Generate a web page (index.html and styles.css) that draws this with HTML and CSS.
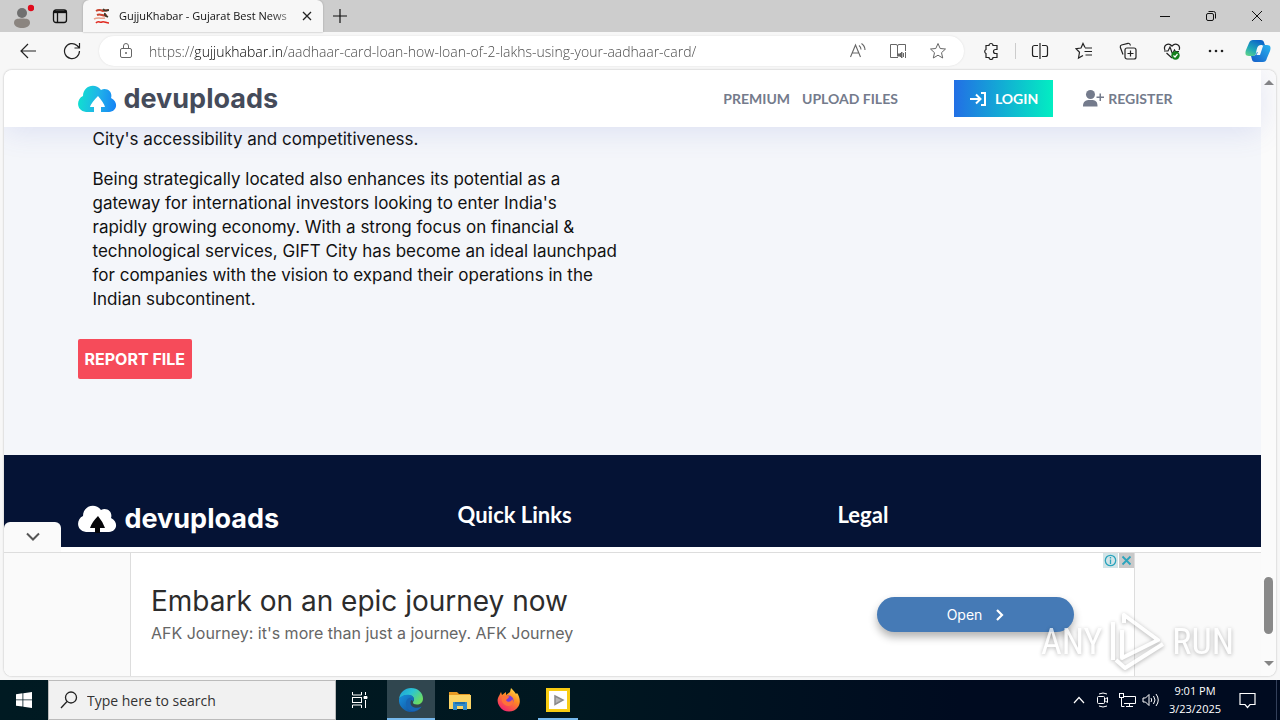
FILE: index.html
```html
<!DOCTYPE html>
<html lang="en">
<head>
    <meta charset="UTF-8">
    <title>GujjuKhabar - Gujarat Best News</title>
    <link rel="stylesheet" href="styles.css">
</head>
<body>
    <div class="browser">
        <div class="tab-strip">
            <button class="strip-btn profile" aria-label="Profile">
                <svg width="24" height="28" viewBox="0 0 24 28"><circle cx="12" cy="11" r="5" fill="#707070"/><path d="M4 21c0-4 3-4.500 8-4.500s8 .5 8 4.500c0 3-4 5-8 5s-8-2-8-5z" fill="#8b8580"/><circle cx="21" cy="6" r="3.200" fill="#e00b1c"/></svg>
            </button>
            <button class="strip-btn" aria-label="Tab actions">
                <svg width="16" height="16" viewBox="0 0 16 16" fill="none" stroke="#111" stroke-width="1.300"><rect x="1.500" y="2" width="13" height="12.500" rx="2.500"/><path d="M2 3.500h12v1H2z" fill="#111"/><path d="M5.500 5v9"/></svg>
            </button>
            <div class="tab">
                <svg width="18" height="18" viewBox="0 0 18 18" fill="none"><path d="M3 4c3-2 5-1 7 0l5-1M4 8c4-2 6 2 10 0" stroke="#c9442f" stroke-width="2"/><path d="M10 2c2 3 4 1 6 1M12 6c-1 3 1 3 3 4" stroke="#3d3a2c" stroke-width="1.800"/><path d="M1 12c4-2 8 0 11-1" stroke="#e8a18c" stroke-width="1.500"/><path d="M3 16c2-3 4 0 6-1s4 1 7 1" stroke="#e02b22" stroke-width="1.600"/></svg>
                <span class="tab-title">GujjuKhabar - Gujarat Best News</span>
                <button class="tab-close" aria-label="Close tab">
                    <svg width="10" height="10" viewBox="0 0 10 10" stroke="#222" stroke-width="1.300"><path d="M1 1l8 8M9 1L1 9"/></svg>
                </button>
            </div>
            <button class="new-tab" aria-label="New tab">
                <svg width="14" height="14" viewBox="0 0 14 14" stroke="#111" stroke-width="1.200"><path d="M7 0v14M0 7h14"/></svg>
            </button>
            <div class="window-controls">
                <button aria-label="Minimize"><svg width="12" height="12" viewBox="0 0 12 12" stroke="#111"><path d="M1 6.500h10"/></svg></button>
                <button aria-label="Restore"><svg width="12" height="12" viewBox="0 0 12 12" fill="none" stroke="#111"><rect x="1.500" y="3.500" width="7" height="7" rx="1.500"/><path d="M3.500 1.500h5a2 2 0 0 1 2 2v5"/></svg></button>
                <button aria-label="Close"><svg width="12" height="12" viewBox="0 0 12 12" stroke="#111"><path d="M1 1l10 10M11 1L1 11"/></svg></button>
            </div>
        </div>

        <div class="toolbar">
            <button class="tool" aria-label="Back"><svg width="18" height="18" viewBox="0 0 18 18" fill="none" stroke="#222" stroke-width="1.200"><path d="M17 9H2M9 2L2 9l7 7"/></svg></button>
            <button class="tool" aria-label="Refresh"><svg width="18" height="18" viewBox="0 0 18 18" fill="none" stroke="#222" stroke-width="1.200"><path d="M16.500 9a7.500 7.500 0 1 1-2.500-5.500L16.500 6M16.500 1v5h-5"/></svg></button>
            <div class="address">
                <button class="lock" aria-label="View site information"><svg width="14" height="18" viewBox="0 0 14 18" fill="none" stroke="#666"><rect x="1.500" y="6.500" width="11" height="9" rx="1.500"/><path d="M4.500 6V4a2.500 2.500 0 0 1 5 0v2"/><circle cx="7" cy="11" r="1" fill="#666" stroke="none"/></svg></button>
                <input class="url" type="text" aria-label="Address" spellcheck="false" value="https://gujjukhabar.in/aadhaar-card-loan-how-loan-of-2-lakhs-using-your-aadhaar-card/">
                <button aria-label="Read aloud"><svg width="18" height="18" viewBox="0 0 18 18" fill="none" stroke="#666" stroke-width="1.100"><path d="M1.500 15L6.500 3l5 12M3.300 11h6.500M10 3.500q2 1.500 2 4M12.500 1.500q3.500 2.500 3.500 6.500"/></svg></button>
                <button aria-label="Immersive reader"><svg width="18" height="18" viewBox="0 0 18 18" fill="none" stroke="#666"><path d="M8.500 3.500v11M9 15.500H1.500v-13H7q1.500 0 1.500 1.500 0-1.500 1.500-1.500h6.500V9"/><path d="M9 12h2l2-2v6l-2-2H9z" fill="#666"/><path d="M14.500 11v4M16.500 10v6"/></svg></button>
                <button aria-label="Add to favorites"><svg width="18" height="18" viewBox="0 0 18 18" fill="none" stroke="#666"><path d="M9 1.500l2.200 5 5.300.5-4 3.700 1.200 5.300L9 13.200 4.300 16l1.200-5.300-4-3.700 5.300-.5z"/></svg></button>
            </div>
            <button class="tool" aria-label="Extensions"><svg width="18" height="18" viewBox="0 0 18 18" fill="none" stroke="#222" stroke-width="1.200"><path d="M4 3.500h3a2 2 0 0 1 4 0h4v4h-1.500a2 2 0 0 0 0 4H15v4h-4a2 2 0 0 1-4 0H4v-4a2.200 2.200 0 0 1 0-4z"/></svg></button>
            <span class="separator"></span>
            <button class="tool" aria-label="Split screen"><svg width="18" height="18" viewBox="0 0 18 18" fill="none" stroke="#222" stroke-width="1.200"><path d="M9 1v16M7 3.500H3.500a2 2 0 0 0-2 2v7a2 2 0 0 0 2 2H7M11 3.500h3.500a2 2 0 0 1 2 2v7a2 2 0 0 1-2 2H11"/></svg></button>
            <button class="tool" aria-label="Favorites"><svg width="18" height="18" viewBox="0 0 18 18" fill="none" stroke="#222" stroke-width="1.200"><path d="M10 5.500L8 1.500 6 6l-5 .7 3.500 3.600L3.500 16l4.500-2.500M10 6h7M9.500 9.500H17M10.500 13H17"/></svg></button>
            <button class="tool" aria-label="Collections"><svg width="18" height="18" viewBox="0 0 18 18" fill="none" stroke="#222" stroke-width="1.200"><rect x="6" y="6" width="11" height="11" rx="2"/><path d="M11.500 8.500v6M8.500 11.500h6M4 12.500L1.300 5.300Q1 3.500 2.500 3L9 1.300q2-.3 2.500 2.200"/></svg></button>
            <button class="tool" aria-label="Browser essentials"><svg width="18" height="18" viewBox="0 0 18 18" fill="none" stroke="#222" stroke-width="1.200"><path d="M2 8C0 4 5-.5 9 4c4-4.500 9 0 7 4M1 9h4l2-4 2.500 7 2-4 1 1.500H16M3.500 11L9 16"/><circle cx="12.500" cy="13.500" r="4.200" fill="#15801b" stroke="none"/><path d="M10.500 13.500l1.500 1.500 2.500-3" stroke="#fff"/></svg></button>
            <button class="tool" aria-label="Settings and more"><svg width="18" height="18" viewBox="0 0 18 18" fill="#222"><circle cx="3" cy="9" r="1.300"/><circle cx="9" cy="9" r="1.300"/><circle cx="15" cy="9" r="1.300"/></svg></button>
            <button class="copilot" aria-label="Copilot">
                <svg width="26" height="24" viewBox="0 0 26 24">
                    <defs>
                        <linearGradient id="cop-a" x1="0" y1="1" x2=".6" y2="0"><stop offset="0" stop-color="#68d982"/><stop offset=".45" stop-color="#20a9b8"/><stop offset="1" stop-color="#0c66c8"/></linearGradient>
                        <linearGradient id="cop-b" x1="0" y1="1" x2="1" y2="0"><stop offset="0" stop-color="#145bc7"/><stop offset="1" stop-color="#28b4f0"/></linearGradient>
                    </defs>
                    <path d="M8 1h8c3 0 3 3 4 5h-4c-4 0-4 4-5 8-.5 3-2 3-4 3H4c-4 0-4-3-3-6l3-7c.8-2 2-3 4-3z" fill="url(#cop-a)"/>
                    <path d="M18 23h-8c-3 0-3-3-4-6h1c4 0 4-2 5-4h2c2 0 2-3 3-6 .5-1 1-1 3-1h2c4 0 4 3 3 6l-3 7c-.8 3-2 4-4 4z" fill="url(#cop-b)"/>
                    <path d="M15 7h3l-3 9h-4c1 0 1.500-2 2-4 .5-3 1-5 2-5z" fill="#f7f7f7"/>
                </svg>
            </button>
        </div>

        <div class="viewport">
            <div class="page">
                <header class="site-header">
                    <div class="container header-row">
                        <a class="brand" href="#">
                            <svg width="39" height="30" viewBox="0 0 39 30">
                                <defs><linearGradient id="cloud" x1="0" y1=".6" x2="1" y2=".7"><stop offset="0" stop-color="#10dfd0"/><stop offset=".5" stop-color="#20b4e8"/><stop offset="1" stop-color="#1683f5"/></linearGradient></defs>
                                <path d="M8 28C-2 27-2 15 5 12 5 2 17-2 23 6c6-3 12 2 10 8 8 4 6 14-2 14z" fill="url(#cloud)"/>
                                <path d="M16 28v-5h-4q1-4 8-11 6 7 7 11h-4v5z" fill="#fff"/>
                            </svg>
                            <span>devuploads</span>
                        </a>
                        <nav class="site-nav">
                            <a href="#">PREMIUM</a>
                            <a href="#">UPLOAD FILES</a>
                            <a class="login" href="#">
                                <svg width="18" height="16" viewBox="0 0 18 16" fill="none" stroke="#fff" stroke-width="2"><path d="M1 8h10M7 3.500L11.500 8 7 12.500M12 2h4v12h-4"/></svg>
                                LOGIN
                            </a>
                            <a class="register" href="#">
                                <svg width="21" height="17" viewBox="0 0 21 17" fill="#747b8c"><circle cx="7.500" cy="4.500" r="4.500"/><path d="M0 16.500c0-5 2-6.500 7.500-6.500s7 1.500 7 6.500z"/><path d="M16.500 3.500h1.500v3h3V8h-3v3h-1.500V8h-3V6.500h3z"/></svg>
                                REGISTER
                            </a>
                        </nav>
                    </div>
                </header>

                <main class="article">
                    <div class="container">
                        <div class="article-text">
                            <p>City's accessibility and competitiveness.</p>
                            <p>Being strategically located also enhances its potential as a<br>
                            gateway for international investors looking to enter India's<br>
                            rapidly growing economy. With a strong focus on financial &amp;<br>
                            technological services, GIFT City has become an ideal launchpad<br>
                            for companies with the vision to expand their operations in the<br>
                            Indian subcontinent.</p>
                        </div>
                        <button class="report-btn">REPORT FILE</button>
                    </div>
                </main>

                <footer class="site-footer">
                    <div class="container footer-cols">
                        <a class="brand brand-light" href="#">
                            <svg width="39" height="30" viewBox="0 0 39 30"><path d="M8 28C-2 27-2 15 5 12 5 2 17-2 23 6c6-3 12 2 10 8 8 4 6 14-2 14z" fill="#fff"/><path d="M17 29v-5h-5q2-6 8-12 5 6 7 12h-5v5z" fill="#060609"/></svg>
                            <span>devuploads</span>
                        </a>
                        <h5>Quick Links</h5>
                        <h5>Legal</h5>
                    </div>
                </footer>

                <aside class="anchor-ad">
                    <button class="ad-collapse" aria-label="Collapse ad"><svg width="16" height="10" viewBox="0 0 16 10" fill="none" stroke="#555" stroke-width="2"><path d="M2 1.500l6 6 6-6"/></svg></button>
                    <div class="ad-frame">
                        <div class="ad-copy">
                            <h2>Embark on an epic journey now</h2>
                            <p>AFK Journey: it's more than just a journey. AFK Journey</p>
                        </div>
                        <button class="ad-open">Open
                            <svg width="8" height="12" viewBox="0 0 8 12" fill="none" stroke="#fff" stroke-width="2.200"><path d="M1 1l5 5-5 5"/></svg>
                        </button>
                        <div class="ad-badges">
                            <button aria-label="Ad info"><svg width="13" height="13" viewBox="0 0 13 13" fill="none" stroke="#2ba4bd" stroke-width="1.300"><circle cx="6.500" cy="6.500" r="5.200"/><path d="M6.500 5.500v4.500M6.500 3v1.500"/></svg></button>
                            <button class="ad-close" aria-label="Close ad"><svg width="11" height="11" viewBox="0 0 11 11" stroke="#2ba4bd" stroke-width="1.800"><path d="M1.500 1.500l8 8M9.500 1.500l-8 8"/></svg></button>
                        </div>
                    </div>
                </aside>
            </div>
            <div class="scrollbar">
                <svg width="10" height="6" viewBox="0 0 10 6"><path d="M0 6l5-5 5 5z" fill="#858585"/></svg>
                <div class="thumb"></div>
                <svg width="10" height="6" viewBox="0 0 10 6"><path d="M0 0l5 5 5-5z" fill="#858585"/></svg>
            </div>
        </div>
    </div>

    <div class="taskbar">
        <button class="start" aria-label="Start"><svg width="16" height="16" viewBox="0 0 16 16" fill="#fff"><path d="M0 2.200L6.500 1.300v6.200H0zM7.300 1.200L16 0v7.500H7.300zM0 8.300h6.500v6.300L0 13.800zM7.300 8.300H16V16l-8.700-1.200z"/></svg></button>
        <label class="search">
            <svg width="18" height="18" viewBox="0 0 18 18" fill="none" stroke="#222" stroke-width="1.300"><circle cx="11" cy="6.500" r="5.500"/><path d="M7 10.500L1 17"/></svg>
            <input type="text" placeholder="Type here to search" aria-label="Search">
        </label>
        <div class="apps">
            <button aria-label="Task View"><svg width="18" height="16" viewBox="0 0 18 16" fill="none" stroke="#fff"><path d="M1.500 0v3h9V0M1.500 16v-3h9v3M14.500 0v3M14.500 8v8"/><rect x="1.500" y="5.500" width="9" height="5"/><path d="M13 4.500h3v2h-3z" fill="#fff"/></svg></button>
            <button class="active" aria-label="Microsoft Edge">
                <svg width="24" height="24" viewBox="0 0 24 24">
                    <defs>
                        <linearGradient id="edge-a" x1="0" y1="0" x2="1" y2=".6"><stop offset="0" stop-color="#1d9bd8"/><stop offset=".5" stop-color="#2bc4d2"/><stop offset="1" stop-color="#6bdc62"/></linearGradient>
                        <linearGradient id="edge-b" x1="0" y1="0" x2="1" y2="1"><stop offset="0" stop-color="#1791dd"/><stop offset="1" stop-color="#124b98"/></linearGradient>
                    </defs>
                    <path d="M0 11C1 4 6 0 12 0c7 0 12 5 12 10.500 0 4-3 6-6 6s-4-1-4-2 1-1.500 1-3C15 6 5 5 0 11z" fill="url(#edge-a)"/>
                    <path d="M0 11C4 5 15 6 15 11c0 1-1 1.500-1 2.500-2-3-6-1-6 3 0 5 6 7.500 10 7-10 3-19-4-18-12.500z" fill="url(#edge-b)"/>
                    <path d="M13.500 9.500C6 9 5 18 10 22c5 3 11 0 12.500-3.500-6 3-13 0-10.500-6z" fill="#1766b4"/>
                </svg>
            </button>
            <button aria-label="File Explorer"><svg width="22" height="19" viewBox="0 0 22 19"><path d="M0 1h8l2 2h11v6H0z" fill="#e79a23"/><path d="M0 4h22v14H0z" fill="#fbd466"/><path d="M4 11h14v8h-4v-4H8v4H4z" fill="#318bcb"/><path d="M6 11h10v2H6z" fill="#1f6fae"/></svg></button>
            <button aria-label="Firefox">
                <svg width="24" height="24" viewBox="0 0 24 24">
                    <defs><linearGradient id="fox" x1=".9" y1="0" x2=".3" y2="1"><stop offset="0" stop-color="#ffe94a"/><stop offset=".45" stop-color="#ff8a22"/><stop offset="1" stop-color="#f3246f"/></linearGradient></defs>
                    <path d="M2 8l2-4 1 3 4-3v3l4-3 1-4c3 3 4 4 5 6l1-1c3 4 4 10 1 14-4 6-14 6-18 0C0 15 0 11 2 8z" fill="url(#fox)"/>
                    <circle cx="11.500" cy="12.500" r="5" fill="#7b3bd8"/>
                    <path d="M5 9c3-2 6-1 8 0-2 0-2 2-4 3 1 3 6 2 6-1 4 5-3 9-7 6-3-2-4-5-3-8z" fill="#ff7139"/>
                </svg>
            </button>
            <button class="running" aria-label="ANY.RUN"><svg width="24" height="24" viewBox="0 0 24 24"><path d="M0 0h24v24H0z" fill="#f8cc12"/><path d="M3 3h18v18H3z" fill="#fff"/><path d="M9 8l8 4-8 4.500z" fill="#b5b5b5" stroke="#8b8b8b" stroke-width="1.500"/></svg></button>
        </div>
        <div class="tray">
            <button aria-label="Show hidden icons"><svg width="12" height="8" viewBox="0 0 12 8" fill="none" stroke="#fff" stroke-width="1.200"><path d="M1 7l5-5.500L11 7"/></svg></button>
            <button aria-label="Meet Now"><svg width="12" height="16" viewBox="0 0 12 16" fill="none" stroke="#fff"><rect x=".5" y="4.500" width="7" height="7" rx="1"/><path d="M7.500 7.500l3-2v5l-3-2M2 2q4-2 8 0M2 14q4 2 8 0"/></svg></button>
            <button aria-label="Network"><svg width="17" height="15" viewBox="0 0 17 15" fill="none" stroke="#fff"><path d="M5 3.500h11.500v7H5M10.500 11v3M7 13.500h7M2.500 5v8.500h3"/><rect x=".5" y=".5" width="4" height="4"/></svg></button>
            <button aria-label="Volume"><svg width="18" height="14" viewBox="0 0 18 14" fill="none" stroke="#fff"><path d="M1 5h2.500L7 1.500v11L3.500 9H1zM9 5q1.500 2 0 4M11.500 3q3 4 0 8M14 1q4.500 6 0 12"/></svg></button>
            <button class="clock"><span>9:01 PM</span><span>3/23/2025</span></button>
            <button class="notify" aria-label="Notifications"><svg width="17" height="17" viewBox="0 0 17 17" fill="none" stroke="#fff" stroke-width="1.200"><path d="M1 1.500h15v11h-5L8.500 15.500 6 12.500H1z"/></svg></button>
        </div>
    </div>

    <div class="watermark">
        <span>ANY</span>
        <svg width="58" height="64" viewBox="0 0 58 64" fill="none" stroke="#fff" stroke-width="4" stroke-linejoin="round"><path d="M14 20v28l36-18L16 5v8M8 50l9 8 38-24M5 12v38"/></svg>
        <span>RUN</span>
    </div>
</body>
</html>
```
FILE: styles.css
```css
:root {
    --ui-font: "Open Sans", "Noto Sans", sans-serif;
    --site-font: Inter, sans-serif;
    --nav-font: Lato, sans-serif;
    --chrome: #f7f7f7;
    --navy: #051335;
}

* {
    margin: 0;
    padding: 0;
    box-sizing: border-box;
}

body {
    display: flex;
    flex-direction: column;
    height: 100vh;
    overflow: hidden;
    font-family: var(--ui-font);
    background: #f3f5f9;
}

button,
input {
    border: none;
    background: none;
    font-family: inherit;
    outline: none;
}

button {
    display: flex;
    align-items: center;
    justify-content: center;
    flex-shrink: 0;
}

svg {
    flex-shrink: 0;
}

a {
    color: inherit;
    text-decoration: none;
}

.browser {
    flex: 1;
    min-height: 0;
    display: flex;
    flex-direction: column;
    background: var(--chrome);
}

/* tabs */
.tab-strip {
    display: flex;
    height: 32px;
    background: #cdcdcd;
}

.strip-btn {
    width: 32px;
}

.profile {
    width: 44px;
}

.tab {
    display: flex;
    align-items: center;
    width: 240px;
    margin-left: 7px;
    padding: 0 8px 0 10px;
    background: var(--chrome);
    border-radius: 6px 6px 0 0;
    box-shadow: 0 0 2px #999;
}

.tab-title {
    flex: 1;
    margin-left: 8px;
    font-size: 11px;
    line-height: 16px;
    color: #111;
    white-space: nowrap;
    mask-image: linear-gradient(90deg, #000 85%, rgba(0, 0, 0, 0.3));
}

.tab-close {
    width: 16px;
    margin-left: 4px;
}

.new-tab {
    width: 34px;
}

.window-controls {
    display: flex;
    margin-left: auto;
}

.window-controls button {
    width: 46px;
}

/* toolbar */
.toolbar {
    display: flex;
    align-items: center;
    height: 38px;
    padding: 0 2px 0 6px;
}

.tool {
    width: 44px;
}

.address {
    flex: 1;
    display: flex;
    height: 30px;
    margin: 0 5px;
    padding: 0 6px 0 12px;
    background: #fff;
    border-radius: 15px;
    box-shadow: 0 0 2px #ddd;
}

.address button {
    width: 40px;
}

.address .lock {
    width: 30px;
}

/* host part of the address is darker than the rest */
.url {
    flex: 1;
    min-width: 0;
    margin-left: 8px;
    font-size: 14px;
    font-weight: 300;
    color: transparent;
    background: linear-gradient(90deg, #444 45px, #000 45px, #000 134px, #444 134px);
    background-clip: text;
    -webkit-background-clip: text;
}

.separator {
    width: 1px;
    height: 16px;
    margin: 0 2px;
    background: #ccc;
}

.copilot {
    width: 40px;
}

/* page area */
.viewport {
    flex: 1;
    min-height: 0;
    display: flex;
    margin: 0 4px 4px;
    background: #fbfbfb;
    border-radius: 8px;
    box-shadow: 0 0 2px #aaa;
    overflow: hidden;
}

.page {
    flex: 1;
    display: flex;
    flex-direction: column;
    font-family: var(--site-font);
}

.container {
    width: 100%;
    max-width: 1140px;
    margin: 0 auto;
    padding: 0 15px;
}

.site-header {
    height: 57px;
    background: #fff;
    box-shadow: 0 4px 30px rgba(80, 90, 200, 0.14);
    z-index: 1;
}

.header-row {
    display: flex;
    align-items: center;
    height: 57px;
}

.brand {
    display: flex;
    align-items: center;
    gap: 7px;
    font-size: 27px;
    line-height: 30px;
    font-weight: 700;
    color: #454b5a;
}

.site-nav {
    display: flex;
    align-items: center;
    gap: 12px;
    margin-left: auto;
    padding-right: 15px;
    font-family: var(--nav-font);
    font-size: 14px;
    line-height: 18px;
    font-weight: 700;
    color: #747b8c;
}

.login {
    display: flex;
    align-items: center;
    gap: 8px;
    height: 37px;
    margin: 0 18px 0 44px;
    padding: 0 15px;
    color: #fff;
    background: linear-gradient(90deg, #226fe5, #02eec2);
}

.register {
    display: flex;
    align-items: center;
    gap: 4px;
}

.article {
    flex: 1;
    background: #f4f6fa;
}

.article-text {
    padding: 0 15px;
    font-size: 17px;
    line-height: 24px;
    color: #111;
}

.article-text p {
    margin-bottom: 16px;
}

.report-btn {
    height: 40px;
    margin-top: 28px;
    padding: 0 7px;
    border-radius: 2px;
    background: #f64b5a;
    color: #fff;
    font-size: 16px;
    font-weight: 700;
}

.site-footer {
    height: 92px;
    background: var(--navy);
    color: #fff;
}

.footer-cols {
    display: grid;
    grid-template-columns: repeat(3, 1fr);
    column-gap: 30px;
    align-items: start;
    padding-top: 45px;
}

.footer-cols h5 {
    font-family: var(--nav-font);
    font-size: 22px;
    line-height: 30px;
    font-weight: 700;
}

.brand-light {
    gap: 8px;
    color: #fff;
    padding-top: 4px;
}

/* anchor ad */
.anchor-ad {
    position: relative;
    height: 129px;
    padding-top: 5px;
    background: #fff;
    z-index: 1;
}

.ad-collapse {
    position: absolute;
    left: 0;
    top: -25px;
    width: 57px;
    height: 30px;
    background: #fafafa;
    border-radius: 6px 6px 0 0;
}

.ad-frame {
    display: flex;
    align-items: center;
    height: 124px;
    padding: 0 187px 0 147px;
    border-top: 1px solid #ddd;
    background: linear-gradient(90deg, #fafafa 126px, #ddd 126px, #ddd 127px, #fff 127px, #fff calc(100% - 127px), #ddd calc(100% - 127px), #ddd calc(100% - 126px), #fafafa calc(100% - 126px));
    position: relative;
}

.ad-copy {
    flex: 1;
}

.ad-copy h2 {
    font-size: 28px;
    line-height: 36px;
    font-weight: 400;
    color: #2c2c2c;
}

.ad-copy p {
    font-size: 16px;
    line-height: 28px;
    color: #666;
}

.ad-open {
    gap: 14px;
    width: 197px;
    height: 35px;
    border-radius: 18px;
    background: #457ab6;
    box-shadow: 0 5px 8px rgba(0, 0, 0, 0.3);
    color: #fff;
    font-size: 14px;
}

.ad-badges {
    position: absolute;
    top: 0;
    right: 127px;
    display: flex;
    gap: 1px;
}

.ad-badges button {
    width: 15px;
    height: 15px;
    background: #d2e4e7;
}

.ad-badges .ad-close {
    background: #c9c9c9;
}

.scrollbar {
    width: 15px;
    display: flex;
    flex-direction: column;
    align-items: center;
    padding: 9px 0;
    background: #fbfbfb;
}

.thumb {
    width: 9px;
    height: 57px;
    margin: auto 0 27px;
    border-radius: 5px;
    background: #898989;
}

/* taskbar */
.taskbar {
    display: flex;
    height: 40px;
    background: linear-gradient(90deg, #001a22 0%, #001720 45%, #000b20 75%);
    color: #fff;
}

.start {
    width: 48px;
}

.search {
    display: flex;
    align-items: center;
    gap: 9px;
    width: 288px;
    padding-left: 11px;
    background: #f1f1f1;
    border: 1px solid #bbb;
}

.search input {
    flex: 1;
    min-width: 0;
    font-size: 14px;
}

.search input::placeholder {
    color: #333;
}

.apps {
    display: flex;
    gap: 1px;
}

.apps button {
    width: 48px;
}

.apps .active {
    margin-left: 2px;
    background: #30464f;
    border-bottom: 2px solid #76b9ed;
    border-top: 2px solid transparent;
}

.apps .running {
    background: linear-gradient(#76b9ed, #76b9ed) center bottom / 40px 2px no-repeat;
}

.tray {
    display: flex;
    margin-left: auto;
    padding-right: 9px;
    border-right: 1px solid #33405a;
    margin-right: 3px;
}

.tray button {
    width: 24px;
    color: #fff;
}

.tray .clock {
    width: 64px;
    flex-direction: column;
    font-size: 11px;
    line-height: 18px;
}

.tray .notify {
    width: 40px;
}

.watermark {
    position: fixed;
    right: 46px;
    bottom: 46px;
    z-index: 3;
    display: flex;
    align-items: center;
    gap: 6px;
    font-family: "Liberation Sans Narrow", "Roboto Condensed", Roboto, sans-serif;
    font-size: 36px;
    line-height: 64px;
    color: #fff;
    opacity: 0.7;
    filter: drop-shadow(0 1px 2px rgba(0, 0, 0, 0.4));
    pointer-events: none;
}
```
